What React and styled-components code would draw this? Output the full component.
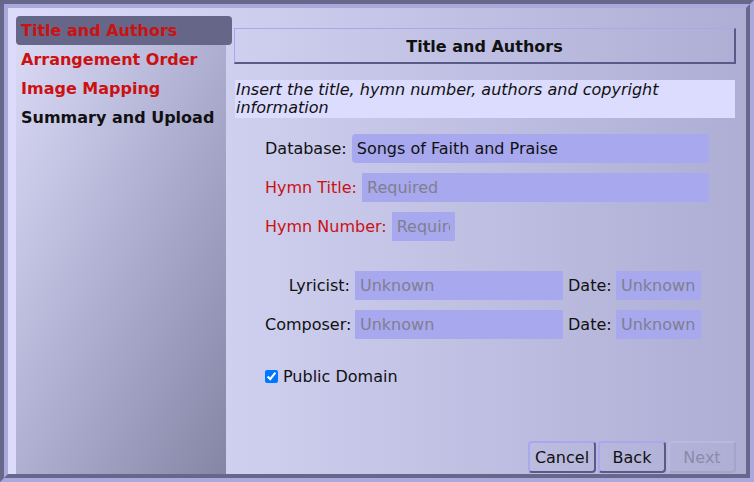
import React from 'react';
import styled, { createGlobalStyle } from 'styled-components';

const GlobalStyle = createGlobalStyle`
  html, body {
    margin: 0;
    padding: 0;
  }
  body {
    font-family: 'DejaVu Sans', 'Liberation Sans', sans-serif;
    font-size: 16px;
    color: #111;
  }
  * {
    box-sizing: border-box;
  }
`;

const Frame = styled.div`
  width: 754px;
  height: 482px;
  border: 4px solid;
  border-color: #67678b #a9a9dc #a9a9dc #67678b;
`;

const Inner = styled.div`
  height: 100%;
  display: flex;
  border: 4px solid;
  border-color: #a9a9dc #67678b #67678b #a9a9dc;
  background: linear-gradient(to right, #dcdcfa 0%, #d0d0f0 28%, #aeaed5 100%);
`;

const Sidebar = styled.nav`
  width: 210px;
  margin: 8px 0 0 8px;
  display: flex;
  flex-direction: column;
  background: linear-gradient(to bottom right, #dcdcf8 0%, #b4b4d6 45%, #8585a6 100%);
`;

const NavItem = styled.div`
  position: relative;
  z-index: 1;
  height: 29px;
  width: ${(p) => (p.$active ? '216px' : '210px')};
  padding-left: 5px;
  display: flex;
  align-items: center;
  font-weight: bold;
  font-size: 16px;
  color: ${(p) => (p.$done ? '#111' : '#cc1111')};
  background: ${(p) => (p.$active ? '#666688' : 'transparent')};
  border-radius: 4px;
`;

const Main = styled.main`
  flex: 1;
  display: flex;
  flex-direction: column;
  padding: 20px 10px 0 8px;
`;

const Header = styled.h1`
  margin: 0;
  height: 36px;
  padding-top: 2px;
  display: flex;
  align-items: center;
  justify-content: center;
  font-size: 16px;
  font-weight: bold;
  border-style: solid;
  border-width: 1px 2px 2px 1px;
  border-color: #a8a8f0 #5a5a88 #5a5a88 #a8a8f0;
`;

const Description = styled.p`
  margin: 16px 1px 0 1px;
  padding: 1px 1px;
  min-height: 38px;
  font-style: italic;
  font-size: 16px;
  line-height: 18px;
  background: #dcdcfe;
`;

const Form = styled.div`
  margin-top: 16px;
  padding: 0 27px 0 31px;
  display: flex;
  flex-direction: column;
  gap: 10px;
`;

const Row = styled.div`
  display: flex;
  align-items: center;
  gap: 5px;
  height: 29px;
`;

const Label = styled.label`
  color: ${(p) => (p.$required ? '#cc1111' : '#111')};
  text-align: ${(p) => (p.$right ? 'right' : 'left')};
  white-space: nowrap;
`;

const Input = styled.input`
  height: 29px;
  width: ${(p) => p.$width || 'auto'};
  flex: ${(p) => (p.$grow ? 1 : 'none')};
  min-width: 0;
  border: none;
  outline: none;
  padding: 0 5px;
  font-family: inherit;
  font-size: 16px;
  color: #111;
  background: #a8a8ee;
  border-radius: ${(p) => (p.$rounded ? '4px' : '0')};
  &::placeholder {
    color: #7f7f8f;
  }
`;

const AuthorGrid = styled.div`
  margin-top: 20px;
  display: grid;
  grid-template-columns: 85px 208px 43px 85px;
  grid-auto-rows: 29px;
  column-gap: 5px;
  row-gap: 10px;
  align-items: center;
`;

const CheckRow = styled.label`
  margin-top: 18px;
  display: flex;
  align-items: center;
  gap: 5px;
  input {
    margin: 0;
    width: 13px;
    height: 13px;
  }
`;

const Buttons = styled.div`
  margin-top: auto;
  margin-bottom: 1px;
  display: flex;
  justify-content: flex-end;
  gap: 2px;
`;

const Button = styled.button`
  width: 68px;
  height: 32px;
  font-family: inherit;
  font-size: 16px;
  color: ${(p) => (p.disabled ? '#8a8aaa' : '#111')};
  background: transparent;
  border-style: solid;
  border-width: 2px;
  border-radius: 4px;
  border-color: ${(p) =>
    p.disabled
      ? '#b8b8e0 #a4a4c8 #a4a4c8 #b8b8e0'
      : '#a8a8f0 #5a5a88 #5a5a88 #a8a8f0'};
  padding: 0;
`;

const steps = [
  { name: 'Title and Authors', active: true },
  { name: 'Arrangement Order' },
  { name: 'Image Mapping' },
  { name: 'Summary and Upload', done: true },
];

export default function App() {
  return (
    <>
      <GlobalStyle />
      <Frame>
        <Inner>
          <Sidebar>
            {steps.map((s) => (
              <NavItem key={s.name} $active={s.active} $done={s.done}>
                {s.name}
              </NavItem>
            ))}
          </Sidebar>
          <Main>
            <Header>Title and Authors</Header>
            <Description>
              Insert the title, hymn number, authors and copyright information
            </Description>
            <Form>
              <Row>
                <Label>Database:</Label>
                <Input $grow $rounded defaultValue="Songs of Faith and Praise" />
              </Row>
              <Row>
                <Label $required>Hymn Title:</Label>
                <Input $grow placeholder="Required" />
              </Row>
              <Row>
                <Label $required>Hymn Number:</Label>
                <Input $width="63px" placeholder="Required" />
              </Row>
              <AuthorGrid>
                <Label $right>Lyricist:</Label>
                <Input placeholder="Unknown" />
                <Label $right>Date:</Label>
                <Input placeholder="Unknown" />
                <Label $right>Composer:</Label>
                <Input placeholder="Unknown" />
                <Label $right>Date:</Label>
                <Input placeholder="Unknown" />
              </AuthorGrid>
              <CheckRow>
                <input type="checkbox" defaultChecked />
                Public Domain
              </CheckRow>
            </Form>
            <Buttons>
              <Button>Cancel</Button>
              <Button>Back</Button>
              <Button disabled>Next</Button>
            </Buttons>
          </Main>
        </Inner>
      </Frame>
    </>
  );
}
